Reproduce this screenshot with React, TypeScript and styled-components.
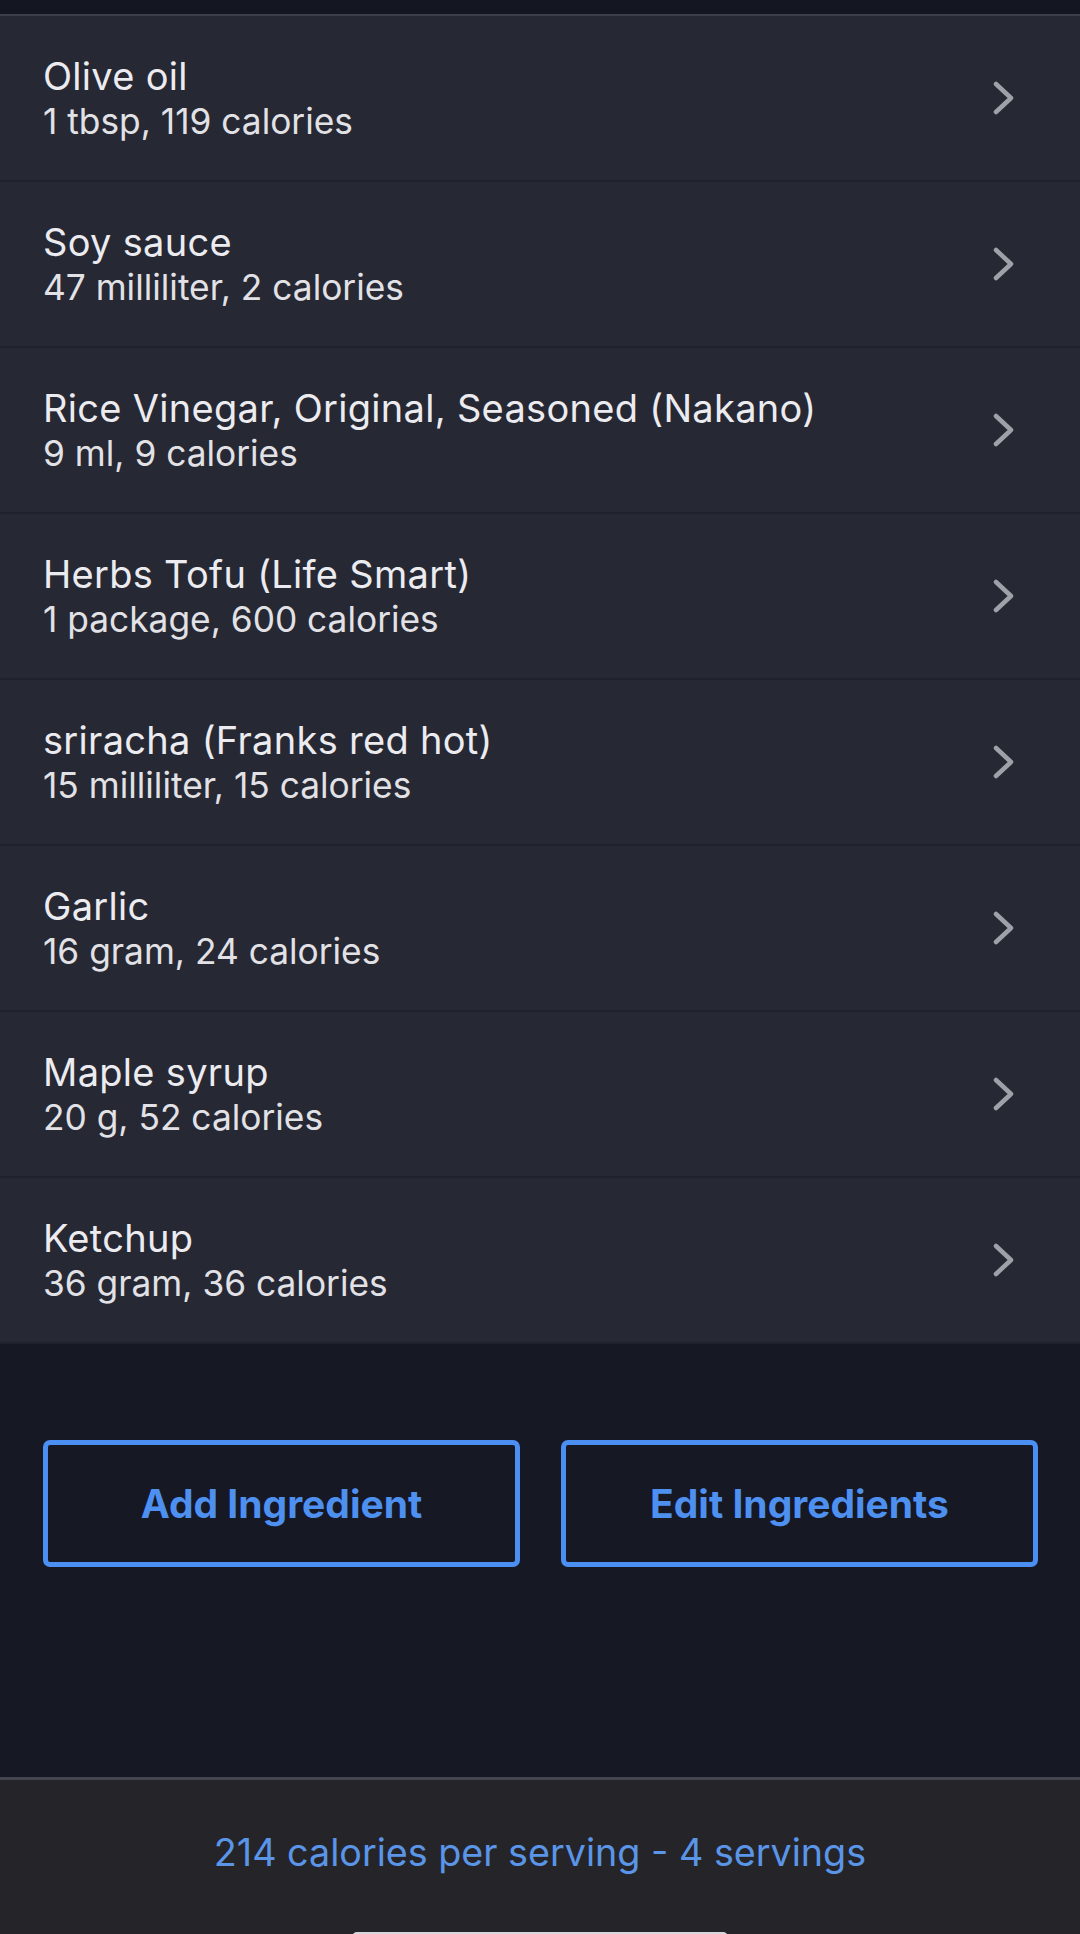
import styled, { createGlobalStyle } from "styled-components";

const GlobalStyle = createGlobalStyle`
  html, body {
    margin: 0;
    padding: 0;
    background: #161824;
  }
  body {
    font-family: Inter, "Noto Sans", "Liberation Sans", sans-serif;
    -webkit-font-smoothing: antialiased;
  }
`

const Screen = styled.div`
  width: 1080px;
  height: 1934px;
  display: flex;
  flex-direction: column;
  background: #161824;
  overflow: hidden;
  position: relative;
`

const TopStrip = styled.div`
  height: 14px;
  background: #141622;
  border-bottom: 2px solid #3c3e4a;
`

const List = styled.div`
  display: flex;
  flex-direction: column;
  background: #262834;
`

const Row = styled.div`
  height: 164px;
  display: flex;
  align-items: center;
  justify-content: space-between;
  padding: 0 65px 0 43px;
  border-bottom: 2px solid #20222b;
`

const RowText = styled.div`
  display: flex;
  flex-direction: column;
  gap: 5px;
  margin-top: 2px;
`

const Title = styled.div`
  font-size: 38px;
  line-height: 41px;
  letter-spacing: 0.3px;
  color: #ececf0;
`

const Subtitle = styled.div`
  font-size: 35.3px;
  line-height: 40px;
  color: #e2e2e6;
`

const Chevron = styled.svg`
  width: 22px;
  height: 34px;
  flex-shrink: 0;
`

const Buttons = styled.div`
  display: flex;
  gap: 41px;
  padding: 96px 42px 0 43px;
`

const OutlineButton = styled.button`
  flex: 1;
  height: 127px;
  background: transparent;
  border: 5px solid #4b8ff2;
  border-radius: 7px;
  color: #4e90f0;
  font-family: Inter, "Noto Sans", sans-serif;
  font-size: 39px;
  font-weight: 700;
  cursor: pointer;
`

const Footer = styled.div`
  margin-top: auto;
  height: 157px;
  border-top: 3px solid #44464f;
  background: #252529;
  display: flex;
  justify-content: center;
  padding-top: 50px;
  box-sizing: border-box;
`

const Summary = styled.div`
  font-size: 37.7px;
  line-height: 44px;
  color: #5b95e8;
`

const HomeIndicator = styled.div`
  position: absolute;
  left: 352px;
  bottom: -8px;
  width: 376px;
  height: 10px;
  border-radius: 5px;
  background: #d8d8dc;
`

const ingredients = [
  { name: "Olive oil", detail: "1 tbsp, 119 calories" },
  { name: "Soy sauce", detail: "47 milliliter, 2 calories" },
  { name: "Rice Vinegar, Original, Seasoned (Nakano)", detail: "9 ml, 9 calories" },
  { name: "Herbs Tofu (Life Smart)", detail: "1 package, 600 calories" },
  { name: "sriracha (Franks red hot)", detail: "15 milliliter, 15 calories" },
  { name: "Garlic", detail: "16 gram, 24 calories" },
  { name: "Maple syrup", detail: "20 g, 52 calories" },
  { name: "Ketchup", detail: "36 gram, 36 calories" },
]

const App = () => {
  return (
    <Screen>
      <GlobalStyle />
      <TopStrip />
      <List>
        {ingredients.map((item) => (
          <Row key={item.name}>
            <RowText>
              <Title>{item.name}</Title>
              <Subtitle>{item.detail}</Subtitle>
            </RowText>
            <Chevron viewBox="0 0 22 34">
              <path
                d="M3 3 L18 17 L3 31"
                fill="none"
                stroke="#9fa1a8"
                strokeWidth="4.5"
                strokeLinecap="round"
                strokeLinejoin="round"
              />
            </Chevron>
          </Row>
        ))}
      </List>

      <Buttons>
        <OutlineButton>Add Ingredient</OutlineButton>
        <OutlineButton>Edit Ingredients</OutlineButton>
      </Buttons>

      <Footer>
        <Summary>214 calories per serving - 4 servings</Summary>
      </Footer>
      <HomeIndicator />
    </Screen>
  )
}

export default App
